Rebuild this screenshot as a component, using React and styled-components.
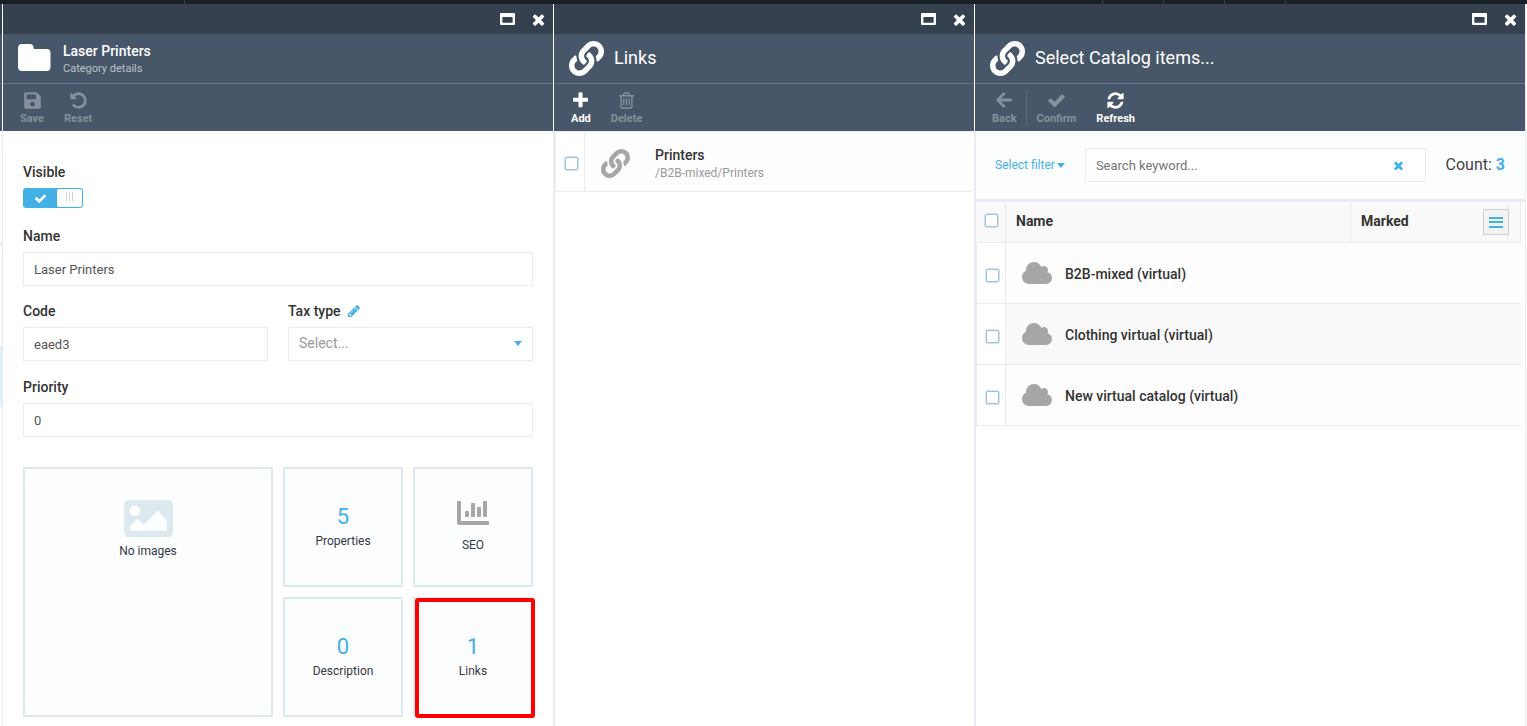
import React from "react";
import styled, { createGlobalStyle, css } from "styled-components";
import { FaArrowLeft, FaLink, FaSave, FaImage, FaChartBar } from "react-icons/fa";

const c = {
  blue: "#43b0e6",
  line: "#eaecf5",
  tileLine: "#dee9ef",
  dark: "#35414e",
  head: "#475769",
  text: "#333",
};

const GlobalStyle = createGlobalStyle`
  *, *::before, *::after { box-sizing: border-box; }
  html, body, #root { height: 100%; }
  body {
    margin: 0;
    background: #fff;
    color: ${c.text};
    font-family: Roboto, "Liberation Sans", sans-serif;
    font-size: 13px;
  }
  button, input, select { font-family: inherit; }
  svg { display: block; flex: none; }
`;

/* ---------- icons ---------- */

const paths = {
  times:
    "M1490 1322q0 40-28 68l-136 136q-28 28-68 28t-68-28l-294-294-294 294q-28 28-68 28t-68-28l-136-136q-28-28-28-68t28-68l294-294-294-294q-28-28-28-68t28-68l136-136q28-28 68-28t68 28l294 294 294-294q28-28 68-28t68 28l136 136q28 28 28 68t-28 68l-294 294 294 294q28 28 28 68z",
  plus:
    "M1600 736v192q0 40-28 68t-68 28h-416v416q0 40-28 68t-68 28h-192q-40 0-68-28t-28-68v-416h-416q-40 0-68-28t-28-68v-192q0-40 28-68t68-28h416v-416q0-40 28-68t68-28h192q40 0 68 28t28 68v416h416q40 0 68 28t28 68z",
  check:
    "M1671 566q0 40-28 68l-724 724-136 136q-28 28-68 28t-68-28l-136-136-362-362q-28-28-28-68t28-68l136-136q28-28 68-28t68 28l294 295 656-657q28-28 68-28t68 28l136 136q28 28 28 68z",
  pencil:
    "M491 1536l91-91-235-235-91 91v107h128v128h107zm523-928q0-22-22-22-10 0-17 7l-542 542q-7 7-7 17 0 22 22 22 10 0 17-7l542-542q7-7 7-17zm-54-192l416 416-832 832h-416v-416zm683 96q0 53-37 90l-166 166-416-416 166-165q36-38 90-38 53 0 91 38l235 234q37 39 37 91z",
  undo:
    "M1664 896q0 156-61 298t-164 245-245 164-298 61q-172 0-327-72.5t-264-204.5q-7-10-6.5-22.5t8.5-20.5l137-138q10-9 25-9 16 2 23 12 73 95 179 147t225 52q104 0 198.5-40.5t163.5-109.5 109.5-163.5 40.5-198.5-40.5-198.5-109.5-163.5-163.5-109.5-198.5-40.5q-98 0-188 35.5t-160 101.5l137 138q31 30 14 69-17 40-59 40h-448q-26 0-45-19t-19-45v-448q0-42 40-59 39-17 69 14l130 129q107-101 244.5-156.5t284.5-55.5q156 0 298 61t245 164 164 245 61 298z",
  refresh:
    "M1639 1056q0 5-1 7-64 268-268 434.5t-478 166.5q-146 0-282.5-55t-243.5-157l-129 129q-19 19-45 19t-45-19-19-45v-448q0-26 19-45t45-19h448q26 0 45 19t19 45-19 45l-137 137q71 66 161 102t187 36q134 0 250-65t186-179q11-17 53-117 8-23 30-23h192q13 0 22.5 9.5t9.5 22.5zm25-800v448q0 26-19 45t-45 19h-448q-26 0-45-19t-19-45 19-45l138-138q-148-137-349-137-134 0-250 65t-186 179q-11 17-53 117-8 23-30 23h-199q-13 0-22.5-9.5t-9.5-22.5v-7q65-268 270-434.5t480-166.5q146 0 284 55.5t245 156.5l130-129q19-19 45-19t45 19 19 45z",
  trash:
    "M704 736v576q0 14-9 23t-23 9h-64q-14 0-23-9t-9-23v-576q0-14 9-23t23-9h64q14 0 23 9t9 23zm256 0v576q0 14-9 23t-23 9h-64q-14 0-23-9t-9-23v-576q0-14 9-23t23-9h64q14 0 23 9t9 23zm256 0v576q0 14-9 23t-23 9h-64q-14 0-23-9t-9-23v-576q0-14 9-23t23-9h64q14 0 23 9t9 23zm128 724v-948h-896v948q0 22 7 40.5t14.5 27 10.5 8.5h832q3 0 10.5-8.5t14.5-27 7-40.5zm-672-1076h448l-48-117q-7-9-17-11h-317q-10 2-17 11zm928 32v64q0 14-9 23t-23 9h-96v948q0 83-47 143.5t-113 60.5h-832q-66 0-113-58.5t-47-141.5v-952h-96q-14 0-23-9t-9-23v-64q0-14 9-23t23-9h309l70-167q15-37 54-63t79-26h320q40 0 79 26t54 63l70 167h309q14 0 23 9t9 23z",
};

const Icon = ({ name, size }) => (
  <svg width={size} height={size} viewBox="0 0 1792 1792" fill="currentColor" aria-hidden="true">
    <path d={paths[name]} />
  </svg>
);

const FolderIcon = () => (
  <svg width="35" height="35" viewBox="0 0 35 35" fill="currentColor" aria-hidden="true">
    <path d="M4 3h8q3.5 0 3.5 3.5v.5q0 1 1 1h12a4 4 0 0 1 4 4v14a4 4 0 0 1-4 4H4a4 4 0 0 1-4-4V7a4 4 0 0 1 4-4z" />
  </svg>
);

const CloudIcon = () => (
  <svg width="32" height="28" viewBox="0 0 2048 1792" fill="currentColor" aria-hidden="true">
    <path d="M1984 1152q0 159-112.5 271.5t-271.5 112.5h-1088q-185 0-316.5-131.5t-131.5-316.5q0-132 71-241.5t187-163.5q-2-28-2-43 0-212 150-362t362-150q158 0 286.5 88t187.5 230q70-62 166-62 106 0 181 75t75 181q0 75-41 138 129 30 213 134.5t84 239.5z" />
  </svg>
);

const MaximizeIcon = () => (
  <svg width="15" height="12" viewBox="0 0 15 12" aria-hidden="true">
    <path
      fill="currentColor"
      fillRule="evenodd"
      d="M1 0h13a1 1 0 0 1 1 1v10a1 1 0 0 1-1 1H1a1 1 0 0 1-1-1V1a1 1 0 0 1 1-1zM2.4 4v5.8h10.2V4z"
    />
  </svg>
);

const Caret = () => (
  <svg width="8" height="5" viewBox="0 0 8 5" fill="currentColor" aria-hidden="true">
    <path d="M0 0h8L4 5z" />
  </svg>
);

const MenuIcon = () => (
  <svg width="14" height="11" viewBox="0 0 14 11" fill="currentColor" aria-hidden="true">
    <path d="M0 0h14v2H0zM0 4h14v2H0zM0 9h14v2H0z" />
  </svg>
);

/* ---------- frame ---------- */

const Page = styled.div`
  display: flex;
  flex-direction: column;
  min-height: 100%;
`;

const TopBar = styled.div`
  display: flex;
  justify-content: flex-end;
  height: 4px;
  padding-right: 241px;
  background: #192027;
`;

const TopCell = styled.span`
  width: ${(p) => p.$width || 61}px;
  flex: ${(p) => (p.$grow ? 1 : "none")};
  border-right: 1px solid #35414e;
`;

const Workspace = styled.main`
  flex: 1;
  display: flex;
`;

const Neighbour = styled.div`
  width: 2px;
  display: flex;
  flex-direction: column;
`;

const Strip = styled.span`
  height: ${(p) => p.$h}px;
  background: ${(p) => p.$bg};
`;

const Blade = styled.section`
  flex: ${(p) => p.$weight} 1 0;
  min-width: 0;
  display: flex;
  flex-direction: column;
`;

const BladeHead = styled.header`
  border-left: 1px solid #fff;
  background: ${c.head};
  color: #fff;
`;

const WindowBar = styled.div`
  display: flex;
  justify-content: flex-end;
  align-items: center;
  gap: 15px;
  height: 30px;
  padding-right: 6px;
  background: ${c.dark};
`;

const PlainButton = styled.button`
  display: flex;
  padding: 0;
  border: 0;
  background: none;
  color: ${(p) => p.$color || "inherit"};
`;

const TitleBar = styled.div`
  display: flex;
  align-items: center;
  gap: 10px;
  height: 50px;
  padding-left: 15px;
  border-bottom: 1px solid #67788a;
`;

const TitleText = styled.div`
  padding-top: 2px;
`;

const Title = styled.h1`
  margin: 0;
  font-size: ${(p) => (p.$large ? 18 : 14)}px;
  line-height: ${(p) => (p.$large ? 26 : 18)}px;
  padding-bottom: ${(p) => (p.$large ? 2 : 0)}px;
  font-weight: ${(p) => (p.$large ? 400 : 500)};
`;

const Subtitle = styled.p`
  margin: 0;
  font-size: 11px;
  line-height: 18px;
  color: #bcc1c8;
`;

const Toolbar = styled.div`
  display: flex;
  height: 47px;
  padding: 7px 7px 0;
`;

const Tool = styled.button`
  display: flex;
  flex-direction: column;
  align-items: center;
  gap: 2px;
  height: 34px;
  padding: 0 ${(p) => (p.$divided ? 9 : 10)}px 0 10px;
  border: 0;
  border-right: ${(p) => (p.$divided ? "1px solid #5d6c7c" : "0")};
  background: none;
  color: #fff;
  font-size: 11px;
  line-height: 16px;
  font-weight: 700;
  &:disabled { color: #85909c; }
`;

const ToolIcon = styled.span`
  display: flex;
  align-items: center;
  height: 18px;
`;

const BladeBody = styled.div`
  flex: 1;
  border-left: ${(p) => p.$edge}px solid ${c.line};
`;

const RightEdge = styled.div`
  width: 2px;
  border-left: 1px solid ${c.line};
`;

/* ---------- form ---------- */

const Form = styled.form`
  padding: 31px 20px 9px;
`;

const Field = styled.div`
  display: flex;
  flex-direction: column;
  gap: 6px;
  margin-bottom: ${(p) => p.$gap || 15}px;
`;

const FieldRow = styled.div`
  display: grid;
  grid-template-columns: 1fr 1fr;
  gap: 20px;
  padding-bottom: 1px;
`;

const LabelRow = styled.div`
  display: flex;
  align-items: center;
  gap: 6px;
  height: 20px;
  font-size: 14px;
  line-height: 20px;
  font-weight: 500;
`;

const controlBox = css`
  width: 100%;
  height: 34px;
  padding: 0 10px;
  border: 1px solid ${c.line};
  border-radius: 0;
  background: #fff;
  outline: none;
`;

const TextInput = styled.input`
  ${controlBox}
  color: #555;
  font-size: 13px;
`;

const SelectWrap = styled.div`
  position: relative;
  color: ${c.blue};
  svg { position: absolute; right: 11px; top: 14px; pointer-events: none; }
`;

const SelectBox = styled.select`
  ${controlBox}
  display: block;
  padding-bottom: 2px;
  appearance: none;
  color: #999;
  font-size: 14px;
`;

const Switch = styled.label`
  display: flex;
  position: relative;
  width: 60px;
  height: 20px;
  padding: 1px;
  border-radius: 3px;
  background: ${c.blue};
  color: #fff;
  input { position: absolute; inset: 0; margin: 0; opacity: 0; }
`;

const SwitchOn = styled.span`
  flex: 1;
  display: flex;
  align-items: center;
  justify-content: center;
`;

const Knob = styled.span`
  display: flex;
  justify-content: center;
  gap: 2px;
  width: 25px;
  padding-top: 3px;
  border-radius: 2px;
  background: #fff;
`;

const Grip = styled.i`
  width: 1px;
  height: 9px;
  background: #d3cfd6;
`;

/* ---------- tiles ---------- */

const Tiles = styled.div`
  display: grid;
  grid-template-columns: 250fr 120fr 120fr;
  grid-auto-rows: 120px;
  gap: 10px;
  padding-top: 15px;
`;

const Tile = styled.button`
  position: relative;
  grid-row: ${(p) => (p.$tall ? "span 2" : "auto")};
  display: flex;
  flex-direction: column;
  align-items: center;
  justify-content: ${(p) => (p.$tall ? "flex-start" : "center")};
  padding: ${(p) => (p.$tall ? "25px 0 0" : "0")};
  border: 2px solid ${c.tileLine};
  background: #fcfdff;
  color: ${(p) => p.$tone || c.blue};
`;

const TileCount = styled.span`
  font-size: 22px;
  line-height: 28px;
`;

const TileName = styled.span`
  padding-bottom: ${(p) => (p.$close ? 4 : 0)}px;
  color: #333a45;
  font-size: 12px;
  line-height: ${(p) => (p.$close ? 16 : 20)}px;
`;

const ChartSlot = styled.span`
  height: 40px;
`;

const Highlight = styled.span`
  position: absolute;
  top: -1px;
  left: 0;
  right: -4px;
  bottom: -3px;
  border: 4px solid #f00;
  border-radius: 3px;
`;

/* ---------- lists ---------- */

const Check = styled.input`
  appearance: none;
  display: block;
  width: 13px;
  height: 13px;
  margin: 0;
  border: 1px solid #9dc2da;
  border-radius: 2px;
  background: #fff;
  box-shadow: 0 0 0 1px #d3e4ee;
`;

const LinkList = styled.ul`
  margin: 0;
  padding: 0 3px 0 0;
  list-style: none;
`;

const LinkItem = styled.li`
  display: flex;
  height: 61px;
  border: 1px solid ${c.line};
  border-right: 0;
  background: #fdfdfd;
`;

const CheckCell = styled.div`
  display: flex;
  align-items: center;
  justify-content: center;
  width: 29px;
  padding: 4px 0 0 2px;
  border-right: 1px solid ${c.line};
  background: #fff;
`;

const LinkIconCell = styled.div`
  display: flex;
  align-items: center;
  width: 70px;
  padding: 3px 0 0 16px;
  color: #a6a6a6;
`;

const LinkText = styled.div`
  padding-top: 14px;
  line-height: 18px;
`;

const ItemName = styled.div`
  font-size: 14px;
  font-weight: 500;
`;

const ItemPath = styled.div`
  color: #999;
  font-size: 12px;
`;

const FilterBar = styled.div`
  display: flex;
  align-items: center;
  gap: 20px;
  height: 71px;
  padding: 0 20px 0 19px;
  border-bottom: 3px solid ${c.line};
  background: #fcfdff;
`;

const FilterLink = styled.button`
  display: flex;
  align-items: center;
  gap: 2px;
  padding: 0;
  border: 0;
  background: none;
  color: ${c.blue};
  font-size: 12px;
  line-height: 16px;
`;

const SearchBox = styled.div`
  flex: 1;
  display: flex;
  align-items: center;
  height: 34px;
  padding: 0 20px 0 0;
  border: 1px solid ${c.line};
  background: #fff;
`;

const SearchInput = styled.input`
  flex: 1;
  min-width: 0;
  height: 32px;
  padding: 0 10px;
  border: 0;
  outline: none;
  background: none;
  font-size: 13px;
  &::placeholder { color: #757575; }
`;

const Count = styled.div`
  font-size: 16px;
  line-height: 20px;
  color: #444;
  b { color: ${c.blue}; }
`;

const TableWrap = styled.div`
  padding-right: 4px;
`;

const Table = styled.table`
  width: 100%;
  border-collapse: separate;
  border-spacing: 0;
  table-layout: fixed;
  font-size: 14px;
`;

const HeadCell = styled.th`
  width: ${(p) => (p.$width ? `${p.$width}px` : "auto")};
  height: 41px;
  padding: 0 0 ${(p) => (p.$lift ? 4 : 2)}px ${(p) => (p.$pad ?? 10)}px;
  border-right: 1px solid ${c.line};
  border-bottom: 1px solid ${c.line};
  background: #f9f9f9;
  text-align: left;
  font-weight: 700;
`;

const HeadFlex = styled.div`
  display: flex;
  align-items: center;
  justify-content: space-between;
`;

const MenuButton = styled.button`
  display: flex;
  align-items: center;
  justify-content: center;
  width: 26px;
  height: 26px;
  margin: 2px -2px 0 0;
  padding: 0;
  border: 1px solid #d0d0d0;
  background: #f3f3f3;
  color: ${c.blue};
`;

const BodyRow = styled.tr`
  background: ${(p) => (p.$odd ? "#f9f9f9" : "#fdfdfd")};
`;

const BodyCell = styled.td`
  height: 61px;
  padding: 2px 0 0 15px;
  border-bottom: 1px solid ${c.line};
  ${(p) =>
    p.$check &&
    css`
      padding: 4px 0 0 9px;
      border-left: 1px solid ${c.line};
      border-right: 1px solid ${c.line};
      background: #fff;
    `}
`;

const CatalogName = styled.div`
  display: flex;
  align-items: center;
  gap: 12px;
  font-weight: 500;
  svg { color: #a6a6a6; }
`;

/* ---------- composition ---------- */

const tileImageTone = "#dee9ef";

const WindowControls = () => (
  <WindowBar>
    <PlainButton type="button" aria-label="Maximize"><MaximizeIcon /></PlainButton>
    <PlainButton type="button" aria-label="Close"><Icon name="times" size={17} /></PlainButton>
  </WindowBar>
);

const ToolButton = ({ label, icon, ...rest }) => (
  <Tool type="button" {...rest}>
    <ToolIcon>{icon}</ToolIcon>
    {label}
  </Tool>
);

const LabeledInput = ({ id, label, value }) => (
  <Field>
    <LabelRow><label htmlFor={id}>{label}</label></LabelRow>
    <TextInput id={id} defaultValue={value} />
  </Field>
);

const catalogs = ["B2B-mixed (virtual)", "Clothing virtual (virtual)", "New virtual catalog (virtual)"];

function DetailsBlade() {
  return (
    <Blade $weight={551}>
      <BladeHead>
        <WindowControls />
        <TitleBar>
          <FolderIcon />
          <TitleText>
            <Title>Laser Printers</Title>
            <Subtitle>Category details</Subtitle>
          </TitleText>
        </TitleBar>
        <Toolbar>
          <ToolButton label="Save" disabled icon={<FaSave size={19} />} />
          <ToolButton label="Reset" disabled icon={<Icon name="undo" size={19} />} />
        </Toolbar>
      </BladeHead>
      <BladeBody $edge={1}>
        <Form>
          <Field $gap={18}>
            <LabelRow><label htmlFor="visible">Visible</label></LabelRow>
            <Switch>
              <input id="visible" type="checkbox" defaultChecked />
              <SwitchOn><Icon name="check" size={13} /></SwitchOn>
              <Knob><Grip /><Grip /><Grip /></Knob>
            </Switch>
          </Field>
          <LabeledInput id="name" label="Name" value="Laser Printers" />
          <FieldRow>
            <LabeledInput id="code" label="Code" value="eaed3" />
            <Field>
              <LabelRow>
                <label htmlFor="tax">Tax type</label>
                <PlainButton type="button" $color={c.blue} aria-label="Edit tax types">
                  <Icon name="pencil" size={14} />
                </PlainButton>
              </LabelRow>
              <SelectWrap>
                <SelectBox id="tax"><option>Select...</option></SelectBox>
                <Caret />
              </SelectWrap>
            </Field>
          </FieldRow>
          <LabeledInput id="priority" label="Priority" value="0" />
          <Tiles>
            <Tile type="button" $tall $tone={tileImageTone}>
              <FaImage size={49} />
              <TileName $close>No images</TileName>
            </Tile>
            <Tile type="button"><TileCount>5</TileCount><TileName>Properties</TileName></Tile>
            <Tile type="button" $tone="#a6a6a6">
              <ChartSlot><FaChartBar size={32} /></ChartSlot>
              <TileName $close>SEO</TileName>
            </Tile>
            <Tile type="button"><TileCount>0</TileCount><TileName>Description</TileName></Tile>
            <Tile type="button">
              <TileCount>1</TileCount>
              <TileName>Links</TileName>
              <Highlight />
            </Tile>
          </Tiles>
        </Form>
      </BladeBody>
    </Blade>
  );
}

function LinksBlade() {
  return (
    <Blade $weight={421}>
      <BladeHead>
        <WindowControls />
        <TitleBar>
          <FaLink size={35} />
          <Title $large>Links</Title>
        </TitleBar>
        <Toolbar>
          <ToolButton label="Add" icon={<Icon name="plus" size={19} />} />
          <ToolButton label="Delete" disabled icon={<Icon name="trash" size={19} />} />
        </Toolbar>
      </BladeHead>
      <BladeBody $edge={2}>
        <LinkList>
          <LinkItem>
            <CheckCell><Check type="checkbox" aria-label="Select Printers" /></CheckCell>
            <LinkIconCell><FaLink size={29} /></LinkIconCell>
            <LinkText>
              <ItemName>Printers</ItemName>
              <ItemPath>/B2B-mixed/Printers</ItemPath>
            </LinkText>
          </LinkItem>
        </LinkList>
      </BladeBody>
    </Blade>
  );
}

function CatalogBlade() {
  return (
    <Blade $weight={551}>
      <BladeHead>
        <WindowControls />
        <TitleBar>
          <FaLink size={35} />
          <Title $large>Select Catalog items...</Title>
        </TitleBar>
        <Toolbar>
          <ToolButton label="Back" disabled $divided icon={<FaArrowLeft size={18} />} />
          <ToolButton label="Confirm" disabled icon={<Icon name="check" size={19} />} />
          <ToolButton label="Refresh" icon={<Icon name="refresh" size={19} />} />
        </Toolbar>
      </BladeHead>
      <BladeBody $edge={2}>
        <FilterBar>
          <FilterLink type="button">Select filter<Caret /></FilterLink>
          <SearchBox>
            <SearchInput aria-label="Search keyword" placeholder="Search keyword..." />
            <PlainButton type="button" $color={c.blue} aria-label="Clear search">
              <Icon name="times" size={13} />
            </PlainButton>
          </SearchBox>
          <Count>Count: <b>3</b></Count>
        </FilterBar>
        <TableWrap>
          <Table>
            <thead>
              <tr>
                <HeadCell $width={30} $pad={9} $lift><Check type="checkbox" aria-label="Select all" /></HeadCell>
                <HeadCell>Name</HeadCell>
                <HeadCell $width={157}>
                  <HeadFlex>
                    Marked
                    <MenuButton type="button" aria-label="Columns menu"><MenuIcon /></MenuButton>
                  </HeadFlex>
                </HeadCell>
                <HeadCell $width={13} $pad={0} />
              </tr>
            </thead>
            <tbody>
              {catalogs.map((name, i) => (
                <BodyRow key={name} $odd={i % 2 === 1}>
                  <BodyCell $check><Check type="checkbox" aria-label={`Select ${name}`} /></BodyCell>
                  <BodyCell colSpan={3}>
                    <CatalogName><CloudIcon />{name}</CatalogName>
                  </BodyCell>
                </BodyRow>
              ))}
            </tbody>
          </Table>
        </TableWrap>
      </BladeBody>
    </Blade>
  );
}

export default function App() {
  return (
    <>
      <GlobalStyle />
      <Page>
        <TopBar>
          <TopCell $width={185} />
          <TopCell $grow />
          <TopCell />
          <TopCell />
          <TopCell />
        </TopBar>
        <Workspace>
          <Neighbour>
            <Strip $h={30} $bg={c.dark} />
            <Strip $h={49} $bg={c.head} />
            <Strip $h={1} $bg="#67788a" />
            <Strip $h={47} $bg={c.head} />
            <Strip $h={112} $bg="#fbfcff" />
            <Strip $h={3} $bg={c.line} />
            <Strip $h={100} $bg="#fdfdfd" />
            <Strip $h={61} $bg="#dff2fa" />
          </Neighbour>
          <DetailsBlade />
          <LinksBlade />
          <CatalogBlade />
          <RightEdge />
        </Workspace>
      </Page>
    </>
  );
}
